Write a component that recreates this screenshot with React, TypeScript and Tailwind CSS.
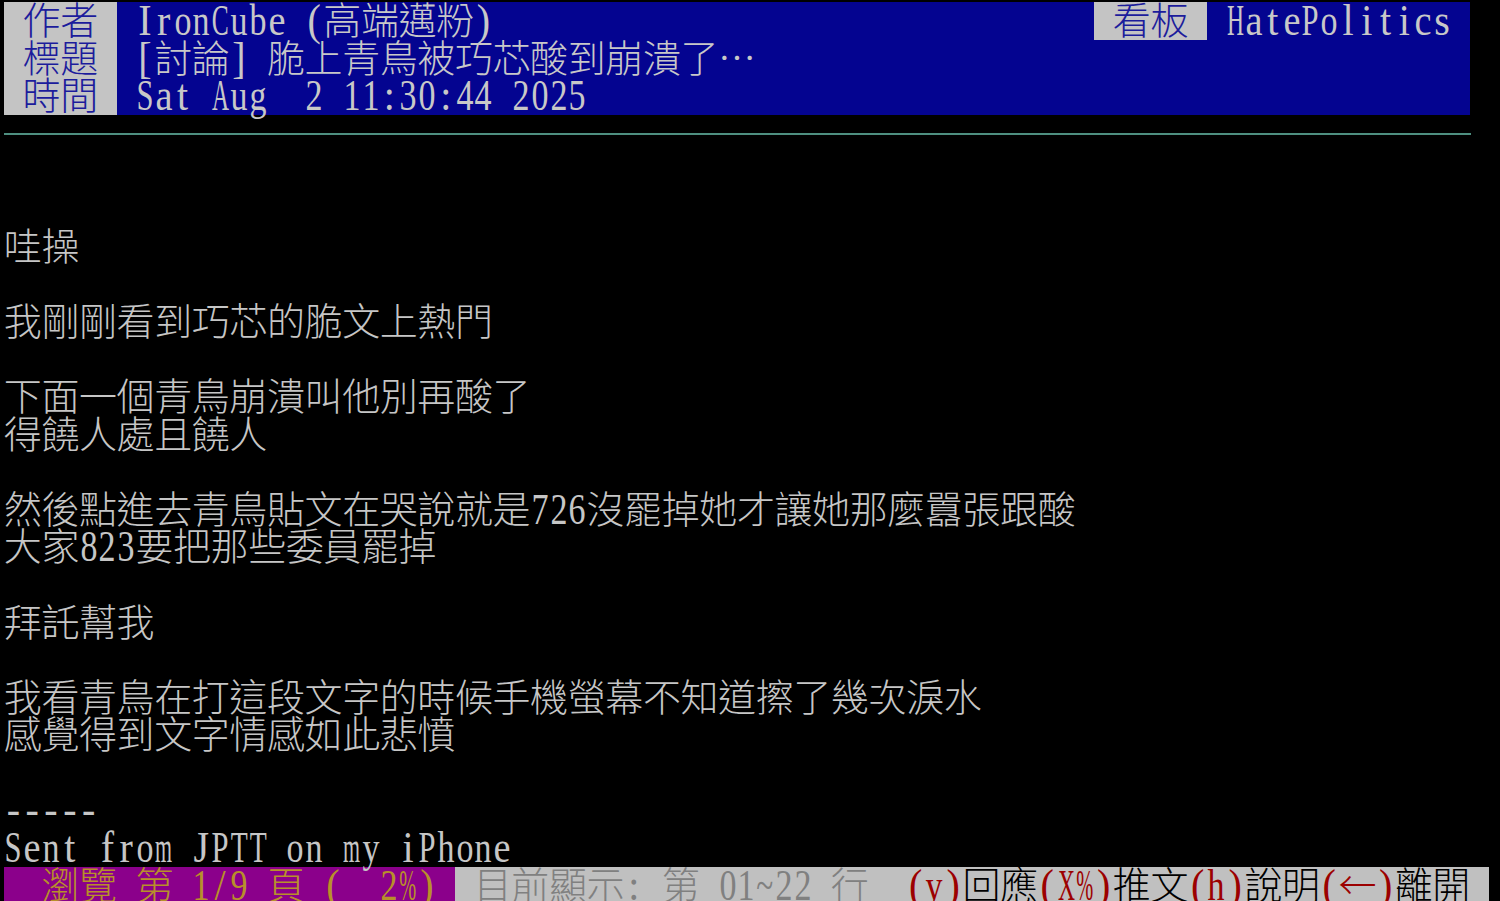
import React from 'react';

// PTT terminal: 80x24 cells, half-width cell 18.8px, row 37.6px
type Seg = { t: string; c: string };

const LABEL = 'bg-[#c4c4c4] text-[#1c1c9c]';
const HEAD = 'bg-[#040490] text-[#c8c8c8]';
const BODY = 'text-[#c6c6c6]';
const STAT1 = 'bg-[#8b008b] text-[#b8902a]';
const STAT2 = 'bg-[#c0c0c0] text-[#808080]';
const KEY = 'bg-[#c0c0c0] text-[#9c0000]';
const ACT = 'bg-[#c0c0c0] text-black';

const isWide = (ch: string) => ch.charCodeAt(0) > 0xff;
const width = (s: string) => Array.from(s).reduce((n, ch) => n + (isWide(ch) ? 2 : 1), 0);
const pad = (s: string, cols: number) => s + ' '.repeat(Math.max(0, cols - width(s)));

let ctx: CanvasRenderingContext2D | null = null;
const scales = new Map<string, number>();
function latinScale(ch: string) {
  if (ch === ' ') return 1;
  const hit = scales.get(ch);
  if (hit !== undefined) return hit;
  if (!ctx && typeof document !== 'undefined') {
    ctx = document.createElement('canvas').getContext('2d');
    if (ctx) ctx.font = "40px 'Liberation Serif'";
  }
  const w = ctx ? ctx.measureText(ch).width : 20;
  const s = Math.min(1, 17 / w);
  scales.set(ch, s);
  return s;
}

const rows: Seg[][] = [
  [
    { t: ' 作者 ', c: LABEL },
    { t: pad(' IronCube (高端邁粉)', 52), c: HEAD },
    { t: ' 看板 ', c: LABEL },
    { t: pad(' HatePolitics', 14), c: HEAD },
  ],
  [
    { t: ' 標題 ', c: LABEL },
    { t: pad(' [討論] 脆上青鳥被巧芯酸到崩潰了…', 72), c: HEAD },
  ],
  [
    { t: ' 時間 ', c: LABEL },
    { t: pad(' Sat Aug  2 11:30:44 2025', 72), c: HEAD },
  ],
  [],
  [],
  [],
  [{ t: '哇操', c: BODY }],
  [],
  [{ t: '我剛剛看到巧芯的脆文上熱門', c: BODY }],
  [],
  [{ t: '下面一個青鳥崩潰叫他別再酸了', c: BODY }],
  [{ t: '得饒人處且饒人', c: BODY }],
  [],
  [{ t: '然後點進去青鳥貼文在哭說就是726沒罷掉她才讓她那麼囂張跟酸', c: BODY }],
  [{ t: '大家823要把那些委員罷掉', c: BODY }],
  [],
  [{ t: '拜託幫我', c: BODY }],
  [],
  [{ t: '我看青鳥在打這段文字的時候手機螢幕不知道擦了幾次淚水', c: BODY }],
  [{ t: '感覺得到文字情感如此悲憤', c: BODY }],
  [],
  [{ t: '-----', c: BODY }],
  [{ t: 'Sent from JPTT on my iPhone', c: BODY }],
  [
    { t: '  瀏覽 第 1/9 頁 (  2%) ', c: STAT1 },
    { t: ' 目前顯示: 第 01~22 行  ', c: STAT2 },
    { t: '(y)', c: KEY },
    { t: '回應', c: ACT },
    { t: '(X%)', c: KEY },
    { t: '推文', c: ACT },
    { t: '(h)', c: KEY },
    { t: '說明', c: ACT },
    { t: '(←)', c: KEY },
    { t: '離開', c: ACT },
    { t: ' ', c: ACT },
  ],
];

function Cell({ ch }: { ch: string }) {
  if (isWide(ch)) {
    return (
      <span className="flex w-[37.6px] shrink-0 justify-center -translate-y-[3px] font-['Noto_Sans_CJK_TC',sans-serif] text-[38px] font-light">
        {ch}
      </span>
    );
  }
  return (
    <span className="flex w-[18.8px] shrink-0 justify-center">
      <span
        className="inline-block font-['Liberation_Serif',serif] text-[40px]"
        style={{ transform: `scale(${latinScale(ch)}, 1.1)` }}
      >
        {ch === ' ' ? '\u00a0' : ch}
      </span>
    </span>
  );
}

function Row({ segs }: { segs: Seg[] }) {
  return (
    <div className="flex h-[37.6px] leading-[37.6px] whitespace-pre">
      {segs.map((s, i) => (
        <span key={i} className={`flex ${s.c}`}>
          {Array.from(s.t).map((ch, j) => (
            <Cell key={j} ch={ch} />
          ))}
        </span>
      ))}
    </div>
  );
}

export default function App() {
  return (
    <div className="h-[901px] w-[1500px] overflow-hidden bg-black pl-[4px] pt-[2px]">
      {rows.map((segs, i) =>
        i === 3 ? (
          <div key={i} className="flex h-[37.6px] items-center">
            <div className="h-[2px] w-[1467px] bg-[#4e8f80]" />
          </div>
        ) : (
          <Row key={i} segs={segs} />
        )
      )}
    </div>
  );
}
